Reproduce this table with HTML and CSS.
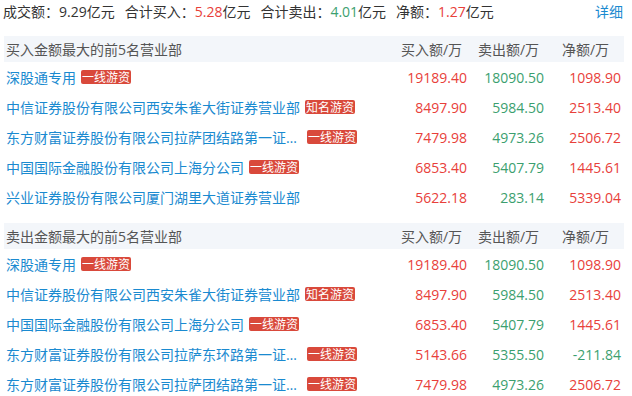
FILE: index.html
```html
<!DOCTYPE html>
<html lang="zh">
<head>
<meta charset="utf-8">
<link rel="stylesheet" href="styles.css">
</head>
<body>
<div class="wrap">
  <div class="summary">
    <div class="stats">
      <span class="stat">成交额：<span class="num">9.29</span>亿元</span>
      <span class="stat">合计买入：<span class="num up">5.28</span>亿元</span>
      <span class="stat">合计卖出：<span class="num down">4.01</span>亿元</span>
      <span class="stat">净额：<span class="num up">1.27</span>亿元</span>
    </div>
    <a class="more">详细</a>
  </div>

  <div class="table">
    <div class="head">
      <div class="name-col">买入金额最大的前5名营业部</div>
      <div class="col">买入额/万</div>
      <div class="col">卖出额/万</div>
      <div class="col">净额/万</div>
    </div>
    <div class="row">
      <div class="name-col"><span class="name">深股通专用</span><span class="tag">一线游资</span></div>
      <div class="col up">19189.40</div><div class="col down">18090.50</div><div class="col up">1098.90</div>
    </div>
    <div class="row">
      <div class="name-col"><span class="name">中信证券股份有限公司西安朱雀大街证券营业部</span><span class="tag">知名游资</span></div>
      <div class="col up">8497.90</div><div class="col down">5984.50</div><div class="col up">2513.40</div>
    </div>
    <div class="row">
      <div class="name-col"><span class="name">东方财富证券股份有限公司拉萨团结路第一证券营业部</span><span class="tag">一线游资</span></div>
      <div class="col up">7479.98</div><div class="col down">4973.26</div><div class="col up">2506.72</div>
    </div>
    <div class="row">
      <div class="name-col"><span class="name">中国国际金融股份有限公司上海分公司</span><span class="tag">一线游资</span></div>
      <div class="col up">6853.40</div><div class="col down">5407.79</div><div class="col up">1445.61</div>
    </div>
    <div class="row">
      <div class="name-col"><span class="name">兴业证券股份有限公司厦门湖里大道证券营业部</span></div>
      <div class="col up">5622.18</div><div class="col down">283.14</div><div class="col up">5339.04</div>
    </div>
  </div>

  <div class="table second">
    <div class="head">
      <div class="name-col">卖出金额最大的前5名营业部</div>
      <div class="col">买入额/万</div>
      <div class="col">卖出额/万</div>
      <div class="col">净额/万</div>
    </div>
    <div class="row">
      <div class="name-col"><span class="name">深股通专用</span><span class="tag">一线游资</span></div>
      <div class="col up">19189.40</div><div class="col down">18090.50</div><div class="col up">1098.90</div>
    </div>
    <div class="row">
      <div class="name-col"><span class="name">中信证券股份有限公司西安朱雀大街证券营业部</span><span class="tag">知名游资</span></div>
      <div class="col up">8497.90</div><div class="col down">5984.50</div><div class="col up">2513.40</div>
    </div>
    <div class="row">
      <div class="name-col"><span class="name">中国国际金融股份有限公司上海分公司</span><span class="tag">一线游资</span></div>
      <div class="col up">6853.40</div><div class="col down">5407.79</div><div class="col up">1445.61</div>
    </div>
    <div class="row">
      <div class="name-col"><span class="name">东方财富证券股份有限公司拉萨东环路第一证券营业部</span><span class="tag">一线游资</span></div>
      <div class="col up">5143.66</div><div class="col down">5355.50</div><div class="col down">-211.84</div>
    </div>
    <div class="row">
      <div class="name-col"><span class="name">东方财富证券股份有限公司拉萨团结路第一证券营业部</span><span class="tag">一线游资</span></div>
      <div class="col up">7479.98</div><div class="col down">4973.26</div><div class="col up">2506.72</div>
    </div>
  </div>
</div>
</body>
</html>
```

FILE: styles.css
```css
* { box-sizing: border-box; }
html, body { margin: 0; padding: 0; background: #fff; }
body {
  font-family: "Open Sans", "Noto Sans CJK SC", sans-serif;
  font-size: 14px;
  color: #333;
  overflow: hidden;
}
.wrap {
  width: 620px;
  margin-left: 4px;
}
.summary {
  display: flex;
  justify-content: space-between;
  align-items: center;
  height: 24px;
  line-height: 24px;
  margin-bottom: 12px;
}
.stats { display: flex; gap: 10px; white-space: nowrap; margin-left: -1px; }
.more { color: #1a8ad0; padding-right: 1px; cursor: pointer; }
.up { color: #e8403a; }
.down { color: #3c9f6f; }
.table.second { margin-top: 11px; }
.head, .row {
  display: flex;
  align-items: center;
}
.head {
  height: 26px;
  background: #f3f6fa;
  color: #555;
}
.row { height: 30px; }
.name-col {
  flex: 1;
  min-width: 0;
  padding-left: 2px;
  display: flex;
  align-items: center;
  white-space: nowrap;
}
.name {
  color: #1a8ad0;
  overflow: hidden;
  text-overflow: ellipsis;
  white-space: nowrap;
  max-width: 296px;
}
.tag {
  flex: none;
  margin-left: 5px;
  background: #d9493b;
  color: #fff;
  font-family: "Noto Sans CJK SC", sans-serif;
  font-size: 12px;
  line-height: 14px;
  height: 14px;
  padding: 0 1px;
  border-radius: 2px;
}
.col {
  flex: none;
  width: 77px;
  text-align: right;
  padding-right: 3px;
}
.head .col { text-align: center; padding-right: 0; }
```
